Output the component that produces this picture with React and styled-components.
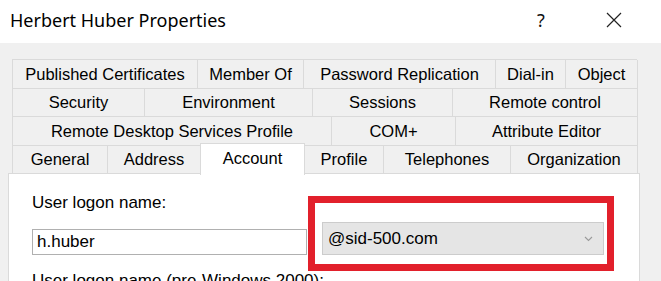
import React from "react";
import styled, { createGlobalStyle } from "styled-components";

const Global = createGlobalStyle`
  html, body { margin: 0; padding: 0; background: #f0f0f0; }
  body { width: 661px; height: 281px; overflow: hidden; }
  * { box-sizing: border-box; }
`;

const Window = styled.div`
  width: 661px;
  height: 281px;
  display: flex;
  flex-direction: column;
  background: #f0f0f0;
  overflow: hidden;
`;

const TitleBar = styled.div`
  height: 43px;
  flex: none;
  background: #ffffff;
  display: flex;
  align-items: center;
  padding-left: 10px;
  padding-right: 24px;
  padding-bottom: 4px;
`;

const Title = styled.div`
  flex: 1;
  font-family: "Noto Sans", "Open Sans", sans-serif;
  font-size: 18px;
  color: #000;
`;

const TitleButton = styled.div`
  width: ${(p) => p.$w}px;
  margin-left: ${(p) => p.$ml || 0}px;
  height: 30px;
  display: flex;
  align-items: center;
  justify-content: center;
  font-family: "Noto Sans", sans-serif;
  font-size: 18px;
  color: #111;
`;

const Body = styled.div`
  flex: 1;
  padding: 16px 0 0 8px;
  display: flex;
  flex-direction: column;
`;

const TabRows = styled.div`
  width: 625px;
  margin-left: 4px;
  display: flex;
  flex-direction: column;
  border-left: 1px solid #dadada;
  border-top: 1px solid #dadada;
  position: relative;
  z-index: 1;
`;

const TabRow = styled.div`
  display: flex;
  height: ${(p) => p.$h}px;
`;

const Tab = styled.div`
  width: ${(p) => p.$w}px;
  flex: none;
  display: flex;
  align-items: center;
  justify-content: center;
  font-family: "Liberation Sans", Arial, sans-serif;
  font-size: 16.5px;
  color: #000;
  white-space: nowrap;
  border-right: 1px solid #dadada;
  border-bottom: 1px solid #dadada;
  background: #f0f0f0;
  ${(p) =>
    p.$active &&
    `
    background: #ffffff;
    margin-top: -3px;
    height: calc(100% + 4px);
    border-top: 1px solid #dadada;
    border-left: 1px solid #dadada;
    margin-left: -1px;
    width: ${p.$w + 1}px;
    border-bottom: none;
    padding-bottom: 2px;
  `}
`;

const Panel = styled.div`
  width: 632px;
  flex: 1;
  margin-top: -1px;
  background: #ffffff;
  border: 1px solid #dadada;
  border-bottom: none;
  padding: 19px 0 0 23px;
  display: flex;
  flex-direction: column;
`;

const Label = styled.div`
  font-family: "Liberation Sans", Arial, sans-serif;
  font-size: 17px;
  line-height: 20px;
  color: #000;
  white-space: nowrap;
`;

const FieldRow = styled.div`
  display: flex;
  align-items: flex-start;
  margin-top: 9px;
  height: 33px;
`;

const TextInput = styled.div`
  width: 275px;
  height: 26px;
  margin-top: 7px;
  border: 1px solid #b0b0b0;
  background: #fff;
  display: flex;
  align-items: center;
  padding-left: 4px;
  font-family: "Liberation Sans", Arial, sans-serif;
  font-size: 17px;
  color: #000;
`;

const ComboWrap = styled.div`
  position: relative;
  margin-left: 15px;
`;

const Combo = styled.div`
  width: 282px;
  height: 33px;
  border: 1px solid #cccccc;
  background: #e5e5e5;
  display: flex;
  align-items: center;
  padding-left: 5px;
  padding-right: 10px;
  font-family: "Liberation Sans", Arial, sans-serif;
  font-size: 17px;
  color: #000;
`;

const ComboText = styled.span`
  flex: 1;
`;

const Highlight = styled.div`
  position: absolute;
  left: -14px;
  top: -26px;
  right: -10px;
  bottom: -16px;
  border: 7px solid #e2202b;
  pointer-events: none;
`;

const NextLabel = styled(Label)`
  margin-top: 16px;
`;

const tabRows = [
  {
    h: 29,
    tabs: [
      ["Published Certificates", 185],
      ["Member Of", 106],
      ["Password Replication", 192],
      ["Dial-in", 70],
      ["Object", 72],
    ],
  },
  {
    h: 28,
    tabs: [
      ["Security", 132],
      ["Environment", 168],
      ["Sessions", 140],
      ["Remote control", 185],
    ],
  },
  {
    h: 29,
    tabs: [
      ["Remote Desktop Services Profile", 319],
      ["COM+", 124],
      ["Attribute Editor", 182],
    ],
  },
  {
    h: 28,
    tabs: [
      ["General", 95],
      ["Address", 93],
      ["Account", 104, true],
      ["Profile", 79],
      ["Telephones", 127],
      ["Organization", 127],
    ],
  },
];

export default function App() {
  return (
    <>
      <Global />
      <Window>
        <TitleBar>
          <Title>Herbert Huber Properties</Title>
          <TitleButton $w={30}>?</TitleButton>
          <TitleButton $w={46} $ml={35}>
            <svg width="16" height="16" viewBox="0 0 16 16">
              <path d="M1 1 L15 15 M15 1 L1 15" stroke="#222" strokeWidth="1.2" fill="none" />
            </svg>
          </TitleButton>
        </TitleBar>
        <Body>
          <TabRows>
            {tabRows.map((row, i) => (
              <TabRow key={i} $h={row.h}>
                {row.tabs.map(([name, w, active]) => (
                  <Tab key={name} $w={w} $active={active}>
                    {name}
                  </Tab>
                ))}
              </TabRow>
            ))}
          </TabRows>
          <Panel>
            <Label>User logon name:</Label>
            <FieldRow>
              <TextInput>h.huber</TextInput>
              <ComboWrap>
                <Combo>
                  <ComboText>@sid-500.com</ComboText>
                  <svg width="9" height="6" viewBox="0 0 9 6">
                    <path d="M1 1 L4.5 4.5 L8 1" stroke="#9a9a9a" strokeWidth="1.1" fill="none" />
                  </svg>
                </Combo>
                <Highlight />
              </ComboWrap>
            </FieldRow>
            <NextLabel>User logon name (pre-Windows 2000):</NextLabel>
          </Panel>
        </Body>
      </Window>
    </>
  );
}
